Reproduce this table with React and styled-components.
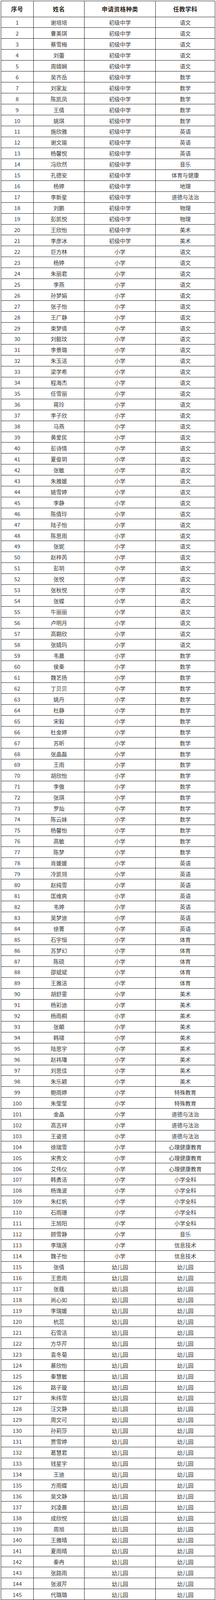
import React from "react";
import styled, { createGlobalStyle } from "styled-components";

const GlobalStyle = createGlobalStyle`
  html, body {
    margin: 0;
    padding: 0;
    background: #fff;
  }
  body {
    font-family: "Noto Sans CJK SC", "Noto Sans", sans-serif;
    color: #333;
  }
`;

// 表头 44px、每行 30.36px（按 4452 高的原图量的），用 fr 按窗口高度分配
const Table = styled.div`
  margin: 2px 2px 0 2px;
  height: calc(100vh - 3px);
  border-top: 1px solid #1a1a1a;
  border-left: 1px solid #1a1a1a;
  display: grid;
  grid-template-columns: 83px 130px 182px 1fr;
  grid-template-rows: minmax(0, 44fr) repeat(145, minmax(0, 30.36fr));
`;

const Row = styled.div`
  display: contents;
`;

const Cell = styled.div`
  display: flex;
  align-items: center;
  justify-content: center;
  box-sizing: border-box;
  min-height: 0;
  overflow: hidden;
  line-height: 1;
  border-right: 1px solid #1a1a1a;
  border-bottom: 1px solid #1a1a1a;
  font-size: 14px;
  color: #3a3a3a;
  white-space: nowrap;
`;

const HeadCell = styled(Cell)`
  font-size: 15px;
  font-weight: 700;
  color: #2a2a2a;
  letter-spacing: 0.5px;
`;

// 姓名，按序号顺序
const NAMES = (
  "谢培培 曹美琪 蔡雪梅 刘蕾 周婧娴 吴齐岳 刘家友 陈凯凤 王倩 姚琪 " +
  "施欣雅 谢文瑜 杨馨悦 冯欣然 孔德安 杨婷 李新星 刘鹏 彭凯悦 王欣怡 " +
  "李彦冰 巨方林 杨婷 朱丽君 李燕 孙梦娟 张子怡 王广静 束梦倩 刘懿玟 " +
  "李景璐 朱玉洁 梁学希 程海杰 任雪丽 蒋玲 李子欣 马燕 黄爱民 彭诗情 " +
  "夏俊玥 张敏 朱雅媛 姚雪婷 李静 陈倩玲 陆子怡 陈思雨 张妮 赵梓芮 " +
  "彭玥 张悦 张秋悦 张蝶 牛丽丽 卢明月 高翾欣 张婧玙 韦晨 侯秦 " +
  "魏艺扬 丁贝贝 姚丹 杜静 宋毅 杜金婷 苏昕 张晶磊 王雨 胡欣怡 " +
  "李傲 张琪 罗灿 陈云妹 杨馨怡 高敏 陈梦 肖媛媛 冷凯翎 赵纯雪 " +
  "匡维爽 韦婷 吴梦迪 徐菁 石宇恒 苏梦幻 陈硕 邵斌斌 王雅洁 胡舒雯 " +
  "杨彩迪 杨雨桐 张頔 韩啸 陆思宇 赵祎璠 刘思佳 朱乐颖 鲍雨婷 朱莹莹 " +
  "金晶 高志祥 王姿贤 徐瑞雪 宋秀文 艾伟仪 韩勇洁 杨逸波 朱红帆 石雨珊 " +
  "王旭阳 顾雪静 李瑞莲 魏子怡 张倩 王思雨 张蔻 尚心如 李瑞媛 杭蕊 " +
  "石雪洁 方华芹 袁冬菊 慕欣怡 秦慧敏 路子璇 朱纬雪 汪文静 周文可 孙莉莎 " +
  "贾雪婷 葛慧君 钱星宇 王迪 方雨蝶 吴文静 刘凌晨 成欣悦 周旭 王雅晴 " +
  "夏雨晴 秦冉 张路雨 张淑芹 代璐璐"
).split(" ");

// [条数, 资格种类, 学科]
const GROUPS = [
  [5, "初级中学", "语文"],
  [5, "初级中学", "数学"],
  [3, "初级中学", "英语"],
  [1, "初级中学", "音乐"],
  [1, "初级中学", "体育与健康"],
  [1, "初级中学", "地理"],
  [1, "初级中学", "道德与法治"],
  [2, "初级中学", "物理"],
  [2, "初级中学", "美术"],
  [37, "小学", "语文"],
  [19, "小学", "数学"],
  [7, "小学", "英语"],
  [5, "小学", "体育"],
  [9, "小学", "美术"],
  [2, "小学", "特殊教育"],
  [3, "小学", "道德与法治"],
  [3, "小学", "心理健康教育"],
  [5, "小学", "小学全科"],
  [1, "小学", "音乐"],
  [2, "小学", "信息技术"],
  [31, "幼儿园", "幼儿园"],
];

const ROWS = GROUPS.flatMap(([count, level, subject]) =>
  Array.from({ length: count }, () => ({ level, subject }))
).map((r, i) => ({ ...r, no: i + 1, name: NAMES[i] }));

const HEADERS = ["序号", "姓名", "申请资格种类", "任教学科"];

export default function App() {
  return (
    <>
      <GlobalStyle />
      <Table>
        <Row>
          {HEADERS.map((h) => (
            <HeadCell key={h}>{h}</HeadCell>
          ))}
        </Row>
        {ROWS.map((r) => (
          <Row key={r.no}>
            <Cell>{r.no}</Cell>
            <Cell>{r.name}</Cell>
            <Cell>{r.level}</Cell>
            <Cell>{r.subject}</Cell>
          </Row>
        ))}
      </Table>
    </>
  );
}
